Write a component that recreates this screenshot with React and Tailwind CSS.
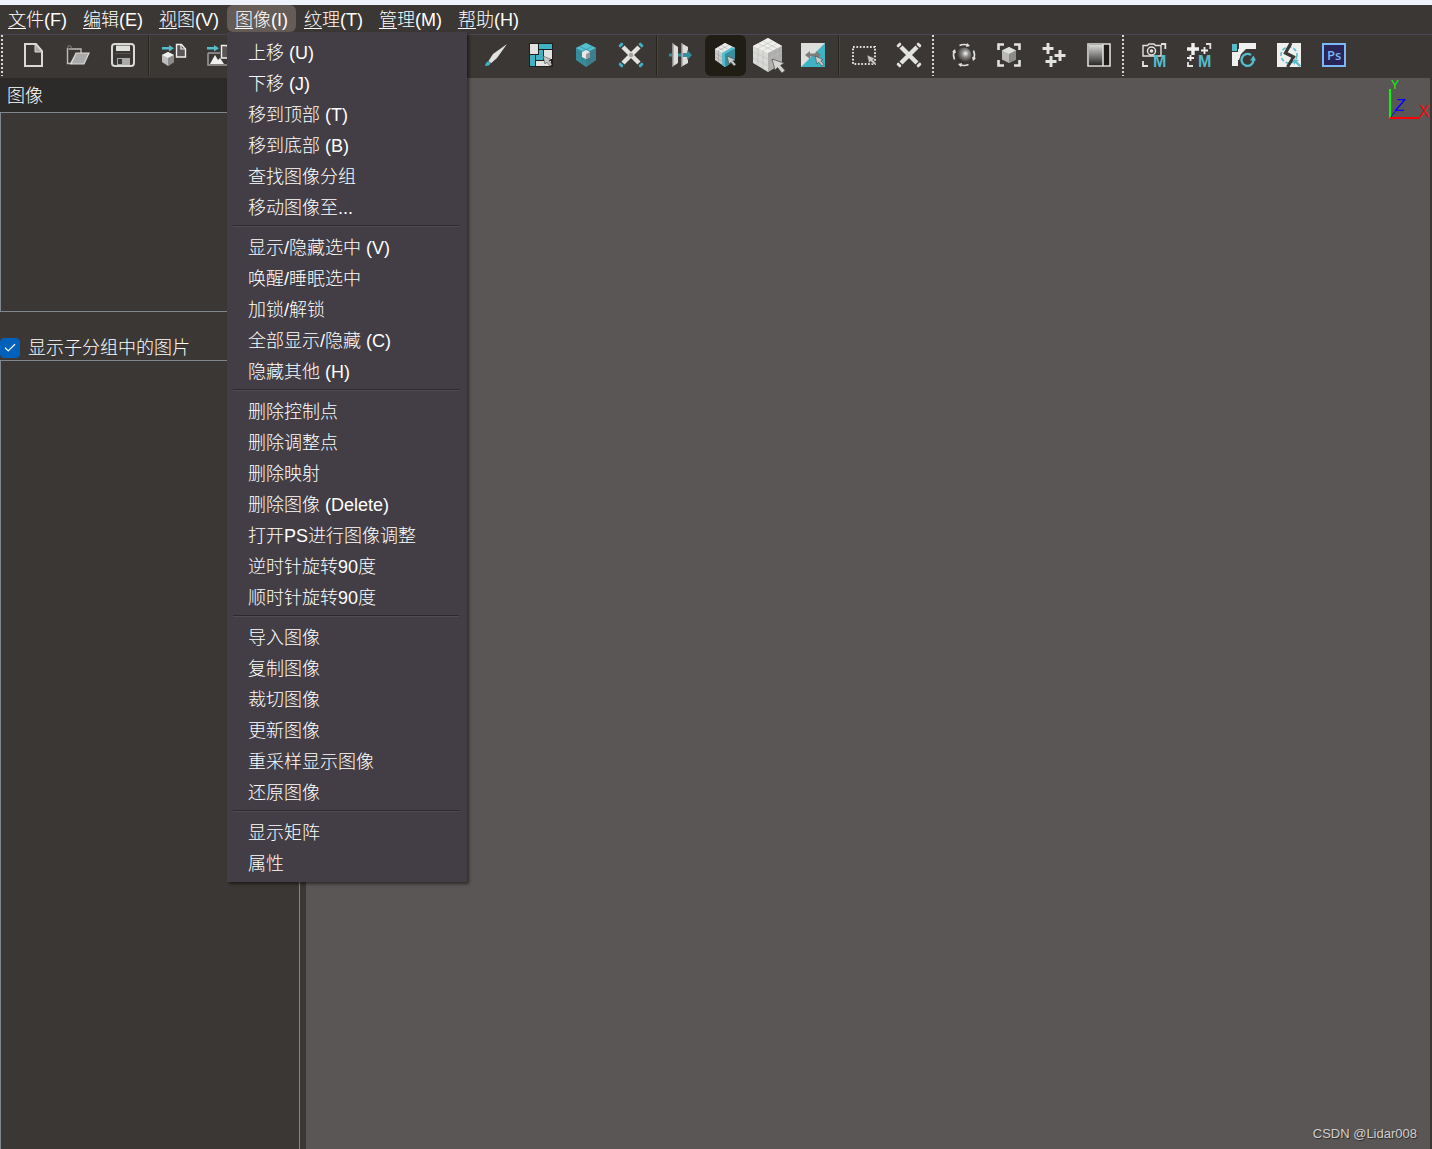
import React, { useState } from 'react';
import clsx from 'clsx';
import { FiCheck } from 'react-icons/fi';

const menus = [
    { first: '文', rest: '件(F)' },
    { first: '编', rest: '辑(E)' },
    { first: '视', rest: '图(V)' },
    { first: '图', rest: '像(I)' },
    { first: '纹', rest: '理(T)' },
    { first: '管', rest: '理(M)' },
    { first: '帮', rest: '助(H)' },
];

const imageMenu = [
    ['上移 (U)', '下移 (J)', '移到顶部 (T)', '移到底部 (B)', '查找图像分组', '移动图像至...'],
    ['显示/隐藏选中 (V)', '唤醒/睡眠选中', '加锁/解锁', '全部显示/隐藏 (C)', '隐藏其他 (H)'],
    ['删除控制点', '删除调整点', '删除映射', '删除图像 (Delete)', '打开PS进行图像调整', '逆时针旋转90度', '顺时针旋转90度'],
    ['导入图像', '复制图像', '裁切图像', '更新图像', '重采样显示图像', '还原图像'],
    ['显示矩阵', '属性'],
];

const Icon = ({ children }) => (
    <svg viewBox="0 0 24 24" className="w-6 h-6 overflow-visible" fill="none">
        {children}
    </svg>
);

const Cursor = ({ x, y, fill = '#c9c9c9' }) => (
    <path
        transform={`translate(${x} ${y})`}
        d="M0 0l2 8 1.8-1.8L7 10l2-1.6-3.2-3.6L8 3.4z"
        fill={fill}
        stroke="#4a4645"
        strokeWidth="0.6"
    />
);

const NewIcon = () => (
    <Icon>
        <path d="M4 1h11l6 7v15H4z" fill="#3b3735" stroke="#d9d9d7" strokeWidth="2" />
        <path d="M14 1v8h7z" fill="#a9a9a9" stroke="#d9d9d7" strokeWidth="1" />
    </Icon>
);

const OpenIcon = () => (
    <Icon>
        <path d="M1.5 5v15.500h3L9 13M3 6h12v4" stroke="#bdbdbb" strokeWidth="1.4" />
        <circle cx="3.500" cy="4.500" r="1.800" stroke="#8b8988" strokeWidth="1" />
        <path d="M10 10h13l-5 11H5z" fill="#aaaaaa" stroke="#d9d9d7" strokeWidth="1.200" />
    </Icon>
);

const SaveIcon = () => (
    <Icon>
        <rect x="1" y="1" width="22" height="22" rx="3" stroke="#d9d9d7" strokeWidth="2" />
        <path d="M5 2.500h14V8H5z" fill="#dededc" />
        <path d="M6 15h13v7H6z" fill="#aaaaaa" />
        <path d="M7 16h4v5H7z" fill="#3b3735" />
        <path d="M4 10.500h16" stroke="#565250" />
    </Icon>
);

const ImportModelIcon = () => (
    <Icon>
        <path d="M0 4h7V2l5 3.200-5 3.200V6.500H0z" fill="#55bccb" />
        <path d="M0 12l6-3 6 3v7l-6 4-6-4z" fill="#bdbdbd" />
        <path d="M0 12l6-3 6 3-6 3z" fill="#eeeeee" />
        <path d="M6 15l6-3v7l-6 4z" fill="#8a8a8a" />
        <path d="M14.500 1.500h5L23.500 6v8h-9z" fill="#5a5655" stroke="#f0f0f0" strokeWidth="1.400" />
        <path d="M19 1.500V6h4.500" stroke="#f0f0f0" strokeWidth="1.200" />
    </Icon>
);

const ImportImageIcon = () => (
    <Icon>
        <path d="M0 4h7V2l5 3.200-5 3.200V6.500H0z" fill="#55bccb" />
        <path d="M1 10v12h22v-5M1 10h12" stroke="#9d9d9b" strokeWidth="1.500" />
        <path d="M3 21l5-9 3 5 2-2 4 6z" fill="#f0f0f0" />
        <path d="M14.500 2.500h5L23.500 7v8h-9z" fill="#5a5655" stroke="#f0f0f0" strokeWidth="1.400" />
    </Icon>
);

const BrushIcon = () => (
    <Icon>
        <path d="M23 1L9 11l-4.500 7 2.500 2.200L13 15z" fill="#e2e2e0" />
        <path d="M1 23c.5-3 2-5 4-4.500 2.200.5 1.500 3-.2 4z" fill="#3fb3c4" />
    </Icon>
);

const TilesIcon = () => (
    <Icon>
        <path d="M0 0h24v24H0z" fill="#201e1d" />
        <path d="M1 1h8v10H1zM15 7h8v9h-8zM7 18h15v5H7z" fill="#e2e2e0" />
        <path d="M10 1h13v5H10zM1 12h5v11H1zM10 7h4v10H7v-5h3z" fill="#3fb3c4" />
        <Cursor x={14} y={13} />
    </Icon>
);

const TealCubeIcon = () => (
    <Icon>
        <path d="M2 5l10-5 10 5v12l-10 7-10-7z" fill="#378f9e" />
        <path d="M2 5l10-5 10 5-10 5z" fill="#54bfce" />
        <path d="M12 10l10-5v12l-10 7z" fill="#3f7f8c" />
        <path d="M5.500 3.300l10 5v13M18.500 3.300l-10 5v13M2 9l10 5 10-5M2 13l10 6 10-6" stroke="#2f7885" strokeWidth="0.5" />
        <path d="M8 9l4-2 4 2v5l-4 2-4-2z" fill="#e8e8e8" />
        <path d="M12 11l4-2v5l-4 2z" fill="#9a9a9a" />
    </Icon>
);

const CrossIcon = ({ tip = '#e2e2e0', hub = '#e2e2e0' }) => (
    <Icon>
        <path d="M4 4l16 16M20 4L4 20" stroke="#e2e2e0" strokeWidth="4.400" />
        <circle cx="12" cy="12" r="2.200" fill={hub} />
        <path
            d="M1.200 2.800L2.800 1.200M21.200 1.200L22.800 2.800M1.200 21.200L2.800 22.800M22.800 21.200L21.200 22.800"
            stroke={tip}
            strokeWidth="3"
            strokeLinecap="round"
        />
    </Icon>
);

const MirrorIcon = () => (
    <Icon>
        <path d="M3 0l6 4v16l-6 4z" fill="#dededc" />
        <path d="M3 0h1.500v23L3 24z" fill="#8b8988" />
        <path d="M0 10.500h3v3H0zM9 10.500h3v3H9z" fill="#378f9e" />
        <path d="M12 0l7 4v16l-7 4z" fill="#dededc" />
        <path d="M12 0h1.500v23l-1.500 1z" fill="#8b8988" />
        <path d="M14 10h4V7l5 5-5 5v-3h-4z" fill="#378f9e" />
    </Icon>
);

const PickCubeIcon = () => (
    <Icon>
        <path d="M2 6l10-6 10 5v12l-10 7-10-7z" fill="#c9c9c7" />
        <path d="M2 6l10-6 10 5-10 6z" fill="#ececec" />
        <path d="M9 10l10-6 3 1.500V17l-10 7-3-2z" fill="#55bccb" />
        <path d="M12 11l10-5.500V17l-10 7z" fill="#378f9e" />
        <path d="M2 10l7 4M2 14l7 4M5.500 8v11M5 4.500l6 3.500M8.500 2.500l6 3.500M5.500 7.500l10-5" stroke="#9a9a98" strokeWidth="0.500" />
        <Cursor x={14} y={13} />
    </Icon>
);

const BigCubeIcon = () => (
    <svg viewBox="0 0 34 36" className="w-[34px] h-9" fill="none">
        <path d="M1 9L16 1l14 8v17L16 35 1 26z" fill="#d9d9d7" />
        <path d="M1 9L16 1l14 8-14 7z" fill="#efefed" />
        <path d="M16 16l14-7v17l-14 9z" fill="#adadab" />
        <path d="M1 15l15 7 14-7M1 21l15 8 14-8M6 11v18M11 14v18M20.500 14v18M25.500 11v18M6 6.500l15 7M11 4l14 7.500M11 13.500l14-7M6 11.500l15-8" stroke="#bdbdbb" strokeWidth="0.600" />
        <path d="M20 22l3 11 2.500-2.500L30 36l3-2.500-4.500-5L32 26z" fill="#d4d4d2" stroke="#5a5655" strokeWidth="0.800" />
    </svg>
);

const SwapIcon = () => (
    <Icon>
        <path d="M0 0h24v24H0z" fill="#dededc" />
        <path d="M24 0v24H0z" fill="#3fb3c4" />
        <path d="M4 12l5-4v2.500h6V8l5 4-5 4v-2.500H9V16z" fill="#7d7d7b" />
        <Cursor x={14} y={13} />
    </Icon>
);

const MarqueeIcon = () => (
    <Icon>
        <path d="M1 4h22v17H1z" stroke="#e2e2e0" strokeWidth="2" strokeDasharray="1.700 1.700" />
        <Cursor x={15} y={12} />
    </Icon>
);

const OrbitIcon = () => (
    <Icon>
        <defs>
            <radialGradient id="ball" cx="0.600" cy="0.400" r="0.600">
                <stop offset="0" stopColor="#f4f4f4" />
                <stop offset="0.400" stopColor="#8b8988" />
                <stop offset="1" stopColor="#2f2c2b" />
            </radialGradient>
        </defs>
        <circle cx="12" cy="12" r="7.500" fill="url(#ball)" />
        <path d="M7.500 2.500Q12 .5 16.500 2.500M21.500 7.500q2 4.500 0 9M16.500 21.500Q12 23.500 7.500 21.500M2.500 16.500q-2-4.500 0-9" stroke="#e2e2e0" strokeWidth="1.600" />
        <path d="M15 0l3 3-4 1zM24 15l-3 3-1-4zM9 24l-3-3 4-1zM0 9l3-3 1 4z" fill="#e2e2e0" />
    </Icon>
);

const FitIcon = () => (
    <Icon>
        <path d="M1.500 7V1.500H7M17 1.500h5.500V7M22.500 17v5.500H17M7 22.500H1.500V17" stroke="#e2e2e0" strokeWidth="2.600" />
        <path d="M5 7.500L12 4l7 3.500v9L12 20l-7-3.500z" fill="#b9b9b7" />
        <path d="M5 7.500L12 4l7 3.500-7 3.500z" fill="#dededc" />
        <path d="M12 11l7-3.500v9L12 20z" fill="#8b8b89" />
    </Icon>
);

const PlusesIcon = () => (
    <Icon>
        <path d="M6 0v11M.5 5.500h11M18 7v11M12.500 12.500h11M9 13v11M3.500 18.500h11" stroke="#e2e2e0" strokeWidth="3" />
    </Icon>
);

const GradientIcon = () => (
    <Icon>
        <defs>
            <linearGradient id="shade" x1="0" y1="0" x2="0" y2="1">
                <stop offset="0" stopColor="#d9d9d7" />
                <stop offset="1" stopColor="#2b2827" />
            </linearGradient>
        </defs>
        <path d="M1 1h22v22H1z" fill="#1f1c1b" stroke="#dededc" strokeWidth="1.600" />
        <path d="M2 2h14v20H2z" fill="url(#shade)" />
        <path d="M16 1v22" stroke="#dededc" strokeWidth="1.600" />
    </Icon>
);

const MarkM = () => (
    <text x="11" y="24" fontSize="16" fontWeight="bold" fill="#55bccb" className="font-['Liberation_Sans',sans-serif]">M</text>
);

const CameraMIcon = () => (
    <Icon>
        <path d="M1 2.500h4.500L7 1h5l1.500 1.500H19V13H1z" stroke="#e2e2e0" strokeWidth="1.400" />
        <circle cx="9.500" cy="8" r="4" stroke="#e2e2e0" strokeWidth="1.500" />
        <circle cx="9.500" cy="8" r="1.800" fill="#e2e2e0" />
        <path d="M19 1h4.300v5M1 18v5h5" stroke="#e2e2e0" strokeWidth="1.800" />
        <MarkM />
    </Icon>
);

const PlusMIcon = () => (
    <Icon>
        <path d="M6 0v12M0 6h12" stroke="#f0f0f0" strokeWidth="3.400" />
        <path d="M17.500 4v7M14 7.500h7M3.500 12v6M0 15h7" stroke="#f0f0f0" strokeWidth="1.800" />
        <path d="M19 1h4.300v5M1 19v4h5" stroke="#e2e2e0" strokeWidth="1.800" />
        <MarkM />
    </Icon>
);

const RefreshTilesIcon = () => (
    <Icon>
        <path d="M0 1h5v7H0z" fill="#55bccb" />
        <path d="M7 0h17v6H7zM0 9h6v14H0zM6 6h8l-5 5-2 6H6z" fill="#f0f0f0" />
        <path d="M19 12a6 6 0 1 0 2.500 5" stroke="#55bccb" strokeWidth="2.400" />
        <path d="M18 17.500l3.500-5 2.500 5z" fill="#55bccb" />
    </Icon>
);

const CutIcon = () => (
    <Icon>
        <path d="M0 0h24v24H0z" fill="#efefed" />
        <circle cx="12" cy="12" r="8" stroke="#55bccb" strokeWidth="1.600" strokeDasharray="4 2" />
        <path d="M14 0L8.500 10l8 4L10.500 24" stroke="#3b3735" strokeWidth="3.200" />
        <path d="M16 16l6 1-2 1.500 4 4-1.500 1.500-4-4-1.500 2z" fill="#55bccb" />
    </Icon>
);

const PsIcon = () => (
    <Icon>
        <path d="M1 1h22v22H1z" fill="#2a2559" stroke="#7cb8f5" strokeWidth="2" />
        <text x="5" y="17" fontSize="13" fontWeight="600" fill="#7cb8f5" className="font-['Open_Sans',sans-serif]">Ps</text>
    </Icon>
);

const ToolButton = ({ label, active, narrow, children }) => (
    <button
        aria-label={label}
        className={clsx('shrink-0 h-[41px] flex items-center justify-center', narrow ? 'w-11' : 'w-[45px]')}
    >
        <span className={clsx('w-[41px] h-[41px] pb-px flex items-center justify-center rounded-md', active && 'bg-[#201e14]')}>
            {children}
        </span>
    </button>
);

const Divider = () => (
    <div className="shrink-0 w-1.5 pl-[3px]">
        <div className="w-0.5 h-10 bg-[#25231a] border-r border-[#4c4838]" />
    </div>
);

const Handle = () => (
    <div className="shrink-0 w-2.5 pl-px">
        <div className="w-0.5 h-[41px] bg-[repeating-linear-gradient(to_bottom,#d8d8d6_0_2px,transparent_2px_4px)]" />
    </div>
);

const Toolbar = () => (
    <div className="h-[44px] shrink-0 flex items-start overflow-hidden border-t border-[#4b4656] bg-[#3b3735]">
        <Handle />
        <ToolButton label="新建"><NewIcon /></ToolButton>
        <ToolButton label="打开"><OpenIcon /></ToolButton>
        <ToolButton label="保存"><SaveIcon /></ToolButton>
        <Divider />
        <ToolButton label="导入模型"><ImportModelIcon /></ToolButton>
        <ToolButton label="导入图像"><ImportImageIcon /></ToolButton>
        <div className="shrink-0 w-[232px]" />
        <ToolButton label="画笔"><BrushIcon /></ToolButton>
        <ToolButton label="选择贴图"><TilesIcon /></ToolButton>
        <ToolButton label="模型"><TealCubeIcon /></ToolButton>
        <ToolButton label="控制点"><CrossIcon tip="#3fb3c4" hub="#a3a3a1" /></ToolButton>
        <Divider />
        <ToolButton label="镜像" narrow><MirrorIcon /></ToolButton>
        <ToolButton label="选择面" narrow active><PickCubeIcon /></ToolButton>
        <ToolButton label="选择体" narrow><BigCubeIcon /></ToolButton>
        <ToolButton label="切换" narrow><SwapIcon /></ToolButton>
        <Divider />
        <ToolButton label="框选"><MarqueeIcon /></ToolButton>
        <ToolButton label="清除"><CrossIcon /></ToolButton>
        <Handle />
        <ToolButton label="环绕"><OrbitIcon /></ToolButton>
        <ToolButton label="适应窗口"><FitIcon /></ToolButton>
        <ToolButton label="添加点"><PlusesIcon /></ToolButton>
        <ToolButton label="渐变"><GradientIcon /></ToolButton>
        <Handle />
        <ToolButton label="相机映射"><CameraMIcon /></ToolButton>
        <ToolButton label="点映射"><PlusMIcon /></ToolButton>
        <ToolButton label="刷新贴图"><RefreshTilesIcon /></ToolButton>
        <ToolButton label="裁切"><CutIcon /></ToolButton>
        <ToolButton label="Photoshop"><PsIcon /></ToolButton>
    </div>
);

const ImageMenu = () => (
    <div role="menu" className="absolute z-10 left-0 top-full w-60 pt-1.5 pb-0.5 bg-[#433e45] shadow-[2px_2px_3px_rgba(0,0,0,0.5)]">
        {imageMenu.map((group, i) => (
            <React.Fragment key={i}>
                {i > 0 && (
                    <div className="h-[9px] pt-px pl-1.5 pr-2">
                        <div className="h-0.5 bg-[#2d292e] border-b border-[#514c53]" />
                    </div>
                )}
                {group.map((label) => (
                    <button key={label} role="menuitem" className="block w-full h-[31px] pl-[21px] text-left whitespace-nowrap">
                        {label}
                    </button>
                ))}
            </React.Fragment>
        ))}
    </div>
);

const MenuBar = () => {
    const [open, setOpen] = useState(3);

    return (
        <nav className="h-[29px] shrink-0 flex items-start bg-[#3b3735]">
            {menus.map((menu, i) => (
                <div key={menu.rest} className="relative">
                    <button
                        onClick={() => setOpen(open === i ? -1 : i)}
                        className={clsx('h-[27px] pt-[3px] px-2 flex items-center rounded-md whitespace-nowrap', open === i && 'bg-[#655b57]')}
                    >
                        <span className="underline underline-offset-2">{menu.first}</span>
                        {menu.rest}
                    </button>
                    {i === 3 && open === i && <ImageMenu />}
                </div>
            ))}
        </nav>
    );
};

const SidePanel = () => {
    const [checked, setChecked] = useState(true);

    return (
        <aside className="w-[300px] shrink-0 flex flex-col bg-[#3b3735]">
            <h2 className="h-[34px] pt-0.5 pl-[7px] flex items-center bg-[#2d2b29]">图像</h2>
            <div className="h-[200px] border border-[#80868f]" />
            <label className="mt-6 h-6 flex items-center gap-2">
                <span className="relative w-5 h-5">
                    <input
                        type="checkbox"
                        checked={checked}
                        onChange={(e) => setChecked(e.target.checked)}
                        className="block appearance-none w-5 h-5 rounded border border-[#0060ba] checked:bg-[#0060ba]"
                    />
                    {checked && <FiCheck className="absolute inset-[3px] w-3.5 h-3.5 pointer-events-none" />}
                </span>
                显示子分组中的图片
            </label>
            <div className="flex-1 border border-b-0 border-[#80868f]" />
        </aside>
    );
};

const AxisGizmo = () => (
    <svg viewBox="0 0 42 42" className="absolute top-0 right-0 w-[42px] h-[42px] overflow-visible font-['Liberation_Sans',sans-serif]" fill="none">
        <path d="M2 11v29" stroke="#00ff00" strokeWidth="2" />
        <path d="M2 40h29" stroke="#ff0000" strokeWidth="2" />
        <path d="M3 39l6-8" stroke="#0000ff" strokeWidth="1" />
        <text x="3" y="11" fontSize="12" fill="#00ff00">Y</text>
        <text x="7" y="33" fontSize="16" fontStyle="italic" fill="#0000ff">Z</text>
        <text x="31" y="39" fontSize="16" fill="#ff0000">X</text>
    </svg>
);

const App = () => (
    <div className="min-h-screen flex flex-col overflow-hidden bg-[#3b3735] text-white text-[18px] leading-[27px] font-light font-['Liberation_Sans','Noto_Sans_CJK_SC',sans-serif]">
        <div className="h-[5px] shrink-0 bg-[#edf2fb]" />
        <MenuBar />
        <Toolbar />
        <div className="flex-1 flex">
            <SidePanel />
            <main className="relative flex-1 ml-1.5 mr-0.5 bg-[#5a5655]">
                <AxisGizmo />
                <span className="absolute right-[13px] bottom-[5px] text-[13px] leading-5 font-normal text-[#d0cfce] [text-shadow:1px_1px_1px_#2b2827]">
                    CSDN @Lidar008
                </span>
            </main>
        </div>
    </div>
);

export default App;
